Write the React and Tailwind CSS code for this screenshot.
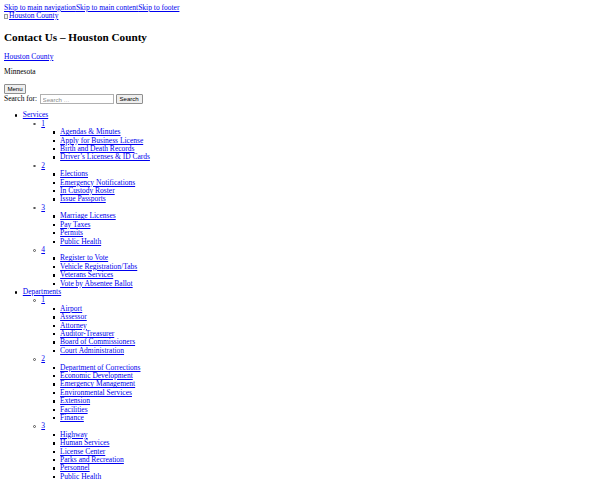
const menu = [
  {
    title: "Services",
    groups: [
      ["Agendas & Minutes", "Apply for Business License", "Birth and Death Records", "Driver’s Licenses & ID Cards"],
      ["Elections", "Emergency Notifications", "In Custody Roster", "Issue Passports"],
      ["Marriage Licenses", "Pay Taxes", "Permits", "Public Health"],
      ["Register to Vote", "Vehicle Registration/Tabs", "Veterans Services", "Vote by Absentee Ballot"]
    ]
  },
  {
    title: "Departments",
    groups: [
      ["Airport", "Assessor", "Attorney", "Auditor-Treasurer", "Board of Commissioners", "Court Administration"],
      ["Department of Corrections", "Economic Development", "Emergency Management", "Environmental Services", "Extension", "Facilities", "Finance"],
      ["Highway", "Human Services", "License Center", "Parks and Recreation", "Personnel", "Public Health", "Public Works", "Recorder", "Sheriff"]
    ]
  }
];

const link = "text-[#0000ee] underline decoration-[0.5px] underline-offset-[1.2px]";

function Bullet({ kind }) {
  if (kind === "disc") return <span className="absolute left-[-8px] top-[3px] w-[2.6px] h-[2.6px] rounded-full bg-black" />;
  if (kind === "circle") return <span className="absolute left-[-8px] top-[3px] w-[2.6px] h-[2.6px] rounded-full border-[0.5px] border-[#555]" />;
  return <span className="absolute left-[-7.5px] top-[3px] w-[2.4px] h-[2.4px] bg-black" />;
}

export default function App() {
  return (
    <div className="bg-white min-h-screen text-black font-['Liberation_Serif',serif] text-[7.5px] leading-[8.4px] pl-[4px] pt-[3.66px]">

      {/* SKIP LINKS */}
      <div>
        <a href="#nav" className={link}>Skip to main navigation</a>
        <a href="#main" className={link}>Skip to main content</a>
        <a href="#footer" className={link}>Skip to footer</a>
      </div>

      {/* LOGO (broken image) */}
      <div>
        <a href="#" className={link + " inline-flex items-end"}>
          <span className="inline-block w-[4px] h-[5px] border-[0.5px] border-[#999] bg-[#f4f4f4] mr-[1px] mb-[1px]" />
          Houston County
        </a>
      </div>

      <h1 className="text-[11.2px] leading-[12.6px] font-bold my-[9.1px]">
        Contact Us – Houston County
      </h1>

      <p className="my-[7.32px]">
        <a href="#" className={link}>Houston County</a>
      </p>

      <p className="my-[7.32px]">Minnesota</p>

      {/* MENU */}
      <div className="h-[10px] flex items-center">
        <button className="h-[10px] w-[22px] bg-[#efefef] border-[0.5px] border-[#8f8f8f] rounded-[1px] font-['Liberation_Sans',sans-serif] text-[6.1px] leading-none">
          Menu
        </button>
      </div>

      {/* SEARCH */}
      <div className="h-[10px] flex items-center">
        <label className="mr-[2.5px]">Search for:</label>
        <input
          placeholder="Search …"
          className="w-[74px] h-[10px] border-[0.5px] border-[#b0b0b0] bg-white px-[2px] font-['Liberation_Sans',sans-serif] text-[6.1px] placeholder:text-[#8a8a8a] outline-none"
        />
        <button className="ml-[2px] w-[27px] h-[10px] bg-[#efefef] border-[0.5px] border-[#8f8f8f] rounded-[1px] font-['Liberation_Sans',sans-serif] text-[6.1px] leading-none">
          Search
        </button>
      </div>

      {/* NAV */}
      <ul className="my-[7.32px] pl-[18.8px]">
        {menu.map(m => (
          <li key={m.title} className="relative">
            <Bullet kind="disc" />
            <a href="#" className={link}>{m.title}</a>
            <ul className="pl-[18.5px]">
              {m.groups.map((g, i) => (
                <li key={i} className="relative">
                  <Bullet kind="circle" />
                  <a href="#" className={link}>{i + 1}</a>
                  <ul className="pl-[18.8px]">
                    {g.map(item => (
                      <li key={item} className="relative">
                        <Bullet kind="square" />
                        <a href="#" className={link}>{item}</a>
                      </li>
                    ))}
                  </ul>
                </li>
              ))}
            </ul>
          </li>
        ))}
      </ul>

    </div>
  );
}
